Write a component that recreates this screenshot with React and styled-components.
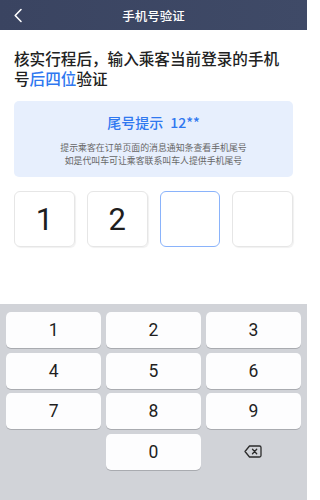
import React from 'react';
import styled, { createGlobalStyle } from 'styled-components';

const GlobalStyle = createGlobalStyle`
  html, body {
    margin: 0;
    padding: 0;
    background: #ffffff;
  }
  body {
    font-family: "Noto Sans CJK SC", "Noto Sans", Roboto, sans-serif;
  }
  * { box-sizing: border-box; }
`;

const Page = styled.div`
  width: 307px;
  height: 500px;
  display: flex;
  flex-direction: column;
  overflow: hidden;
  background: #ffffff;
`;

const Header = styled.div`
  height: 30px;
  flex-shrink: 0;
  display: grid;
  grid-template-columns: 40px 1fr 40px;
  align-items: center;
  background: linear-gradient(90deg, #3a4461 0%, #3f4a67 100%);
  color: #ffffff;
`;

const BackButton = styled.div`
  display: flex;
  align-items: center;
  padding-left: 13px;
`;

const HeaderTitle = styled.div`
  text-align: center;
  font-size: 12.5px;
  font-weight: 500;
`;

const Content = styled.div`
  flex: 1;
  padding: 18px 14px 0;
  display: flex;
  flex-direction: column;
`;

const Title = styled.div`
  font-size: 15.6px;
  line-height: 20px;
  font-weight: 500;
  color: #222222;
`;

const Accent = styled.span`
  color: #2f78f0;
`;

const HintBox = styled.div`
  margin-top: 13px;
  height: 76px;
  border-radius: 5px;
  background: #e7effd;
  display: flex;
  flex-direction: column;
  align-items: center;
  padding-top: 11px;
`;

const HintTitle = styled.div`
  font-size: 14px;
  line-height: 20px;
  font-weight: 500;
  color: #2f78f0;
  display: flex;
  gap: 7px;
`;

const HintText = styled.div`
  margin-top: 9px;
  font-size: 8.9px;
  line-height: 13px;
  color: #666666;
  text-align: center;
`;

const CodeRow = styled.div`
  margin-top: 14px;
  display: grid;
  grid-template-columns: repeat(4, 1fr);
  gap: 12px;
`;

const CodeCell = styled.div`
  height: 56px;
  border-radius: 6px;
  border: 1px solid ${({ $active }) => ($active ? '#8ab3fb' : '#e6e6e6')};
  box-shadow: ${({ $active }) => ($active ? 'none' : '1px 1px 1px rgba(0,0,0,0.06)')};
  display: flex;
  align-items: center;
  justify-content: center;
  font-family: Roboto, "Noto Sans", sans-serif;
  font-size: 31px;
  color: #1e1e1e;
`;

const Keyboard = styled.div`
  height: 196px;
  flex-shrink: 0;
  background: #d1d3d8;
  padding: 8px 6px 30px;
  display: grid;
  grid-template-columns: repeat(3, 1fr);
  grid-auto-rows: 36px;
  gap: 4.5px 4.5px;
`;

const Key = styled.div`
  border-radius: 5px;
  background: ${({ $plain }) => ($plain ? 'transparent' : '#fdfdfe')};
  box-shadow: ${({ $plain }) => ($plain ? 'none' : '0 1px 0 #a9abb0')};
  display: flex;
  align-items: center;
  justify-content: center;
  font-family: Roboto, "Noto Sans", sans-serif;
  font-size: 17.5px;
  color: #1f1f1f;
`;

const ChevronIcon = () => (
  <svg width="10" height="15" viewBox="0 0 10 15">
    <path d="M8 1.5 L2.2 7.5 L8 13.5" fill="none" stroke="#ffffff" strokeWidth="1.6" strokeLinecap="round" strokeLinejoin="round" />
  </svg>
);

const DeleteIcon = () => (
  <svg width="18" height="13" viewBox="0 0 18 13">
    <path
      d="M5.5 1 H15.5 Q17 1 17 2.5 V10.5 Q17 12 15.5 12 H5.5 L1 6.5 Z"
      fill="none"
      stroke="#2b2b2b"
      strokeWidth="1.3"
      strokeLinejoin="round"
    />
    <path d="M8.5 4.3 L12.7 8.7 M12.7 4.3 L8.5 8.7" stroke="#2b2b2b" strokeWidth="1.3" strokeLinecap="round" />
  </svg>
);

const code = ['1', '2', '', ''];
const keys = ['1', '2', '3', '4', '5', '6', '7', '8', '9'];

export default function App() {
  return (
    <>
      <GlobalStyle />
      <Page>
        <Header>
          <BackButton>
            <ChevronIcon />
          </BackButton>
          <HeaderTitle>手机号验证</HeaderTitle>
          <div />
        </Header>
        <Content>
          <Title>
            核实行程后，输入乘客当前登录的手机号<Accent>后四位</Accent>验证
          </Title>
          <HintBox>
            <HintTitle>
              <span>尾号提示</span>
              <span>12**</span>
            </HintTitle>
            <HintText>
              提示乘客在订单页面的消息通知条查看手机尾号
              <br />
              如是代叫车可让乘客联系叫车人提供手机尾号
            </HintText>
          </HintBox>
          <CodeRow>
            {code.map((d, i) => (
              <CodeCell key={i} $active={i === 2}>
                {d}
              </CodeCell>
            ))}
          </CodeRow>
        </Content>
        <Keyboard>
          {keys.map((k) => (
            <Key key={k}>{k}</Key>
          ))}
          <Key $plain />
          <Key>0</Key>
          <Key $plain>
            <DeleteIcon />
          </Key>
        </Keyboard>
      </Page>
    </>
  );
}
